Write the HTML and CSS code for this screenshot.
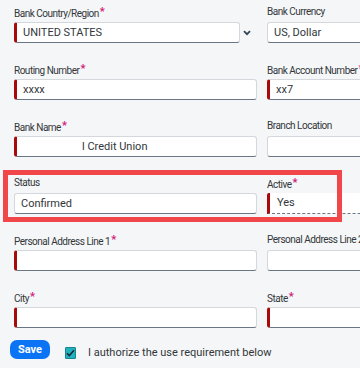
FILE: index.html
```html
<!DOCTYPE html>
<html>
  <head>
    <link rel="stylesheet" href="styles.css">
  </head>
  <body>
    <div class="form">
      <div class="field">
        <label>Bank Country/Region<span class="req">*</span></label>
        <div class="control">
          <div class="input required">UNITED STATES</div>
          <svg class="chevron" width="8" height="6" viewBox="0 0 8 6">
            <path d="M1 1.2l3 3 3-3" fill="none" stroke="#32465a" stroke-width="1.8"></path>
          </svg>
        </div>
      </div>
      <div class="field">
        <label>Bank Currency</label>
        <div class="input">US, Dollar</div>
      </div>

      <div class="field">
        <label>Routing Number<span class="req">*</span></label>
        <div class="input required">xxxx</div>
      </div>
      <div class="field">
        <label>Bank Account Number<span class="req">*</span></label>
        <div class="input required">xx7</div>
      </div>

      <div class="field">
        <label>Bank Name<span class="req">*</span></label>
        <div class="input required"><span class="masked">l Credit Union</span></div>
      </div>
      <div class="field">
        <label>Branch Location</label>
        <div class="input"></div>
      </div>

      <div class="field">
        <label>Status</label>
        <div class="input">Confirmed</div>
      </div>
      <div class="field">
        <label>Active<span class="req">*</span></label>
        <div class="input required plain">Yes</div>
      </div>

      <div class="field">
        <label>Personal Address Line 1<span class="req">*</span></label>
        <div class="input required"></div>
      </div>
      <div class="field">
        <label>Personal Address Line 2</label>
        <div class="input"></div>
      </div>

      <div class="field">
        <label>City<span class="req">*</span></label>
        <div class="input required"></div>
      </div>
      <div class="field">
        <label>State<span class="req">*</span></label>
        <div class="input required"></div>
      </div>
    </div>

    <div class="footer">
      <button class="save">Save</button>
      <span class="check">
        <svg width="9" height="8" viewBox="0 0 9 8">
          <path d="M1 4.2l2.3 2.3L8 1.2" fill="none" stroke="#1d2b36" stroke-width="1.6"></path>
        </svg>
      </span>
      <span class="agree">I authorize the use requirement below</span>
    </div>

    <div class="highlight"></div>
  </body>
</html>
```

FILE: styles.css
```css
* {
  margin: 0;
  padding: 0;
  box-sizing: border-box;
}

body {
  width: 360px;
  height: 368px;
  overflow: hidden;
  position: relative;
  background: #f5f6f7;
  color: #32363a;
  font-family: Roboto, "Liberation Sans", sans-serif;
  font-size: 11px;
}

.form {
  display: grid;
  grid-template-columns: 243px 243px;
  column-gap: 10px;
  row-gap: 19px;
  padding: 5px 0 0 14px;
  width: 520px;
}

.field label {
  display: block;
  height: 14px;
  line-height: 14px;
  margin-bottom: 3px;
  font-size: 10px;
  letter-spacing: -0.5px;
  white-space: nowrap;
}

.req {
  color: #d1197a;
  font-weight: bold;
  font-size: 11px;
  vertical-align: 2px;
  margin-left: 1px;
}

.control {
  display: flex;
  align-items: center;
}

.control .input {
  width: 226px;
}

.chevron {
  margin-left: 3px;
}

.input {
  height: 21px;
  line-height: 19px;
  background: #fff;
  border: 1px solid #d4d8dc;
  border-bottom-color: #6a7684;
  border-radius: 3px;
  padding-left: 6px;
  white-space: nowrap;
  overflow: hidden;
}

.input.required {
  border-left: 3px solid #a80a0a;
}

.input.plain {
  border-top: none;
  border-right: none;
  border-bottom: 1px dashed #6a7684;
  border-radius: 2px 0 0 0;
  line-height: 20px;
  padding-left: 7px;
  width: 300px;
}

.masked {
  margin-left: 59px;
}

.footer {
  display: flex;
  align-items: center;
  margin-top: 11px;
  padding-left: 10px;
}

.save {
  width: 40px;
  height: 19px;
  border: none;
  border-radius: 7px;
  background: #0b74f5;
  color: #fff;
  font-family: inherit;
  font-size: 11px;
  font-weight: bold;
}

.check {
  display: flex;
  align-items: center;
  justify-content: center;
  width: 11px;
  height: 12px;
  margin: 7px 0 0 15px;
  background: #1fb1bd;
  border: 1px solid #16858f;
  border-radius: 1px;
}

.agree {
  margin: 7px 0 0 12px;
}

.highlight {
  position: absolute;
  left: 3px;
  top: 170px;
  width: 339px;
  height: 52px;
  border: 5px solid #f2474a;
}
```
